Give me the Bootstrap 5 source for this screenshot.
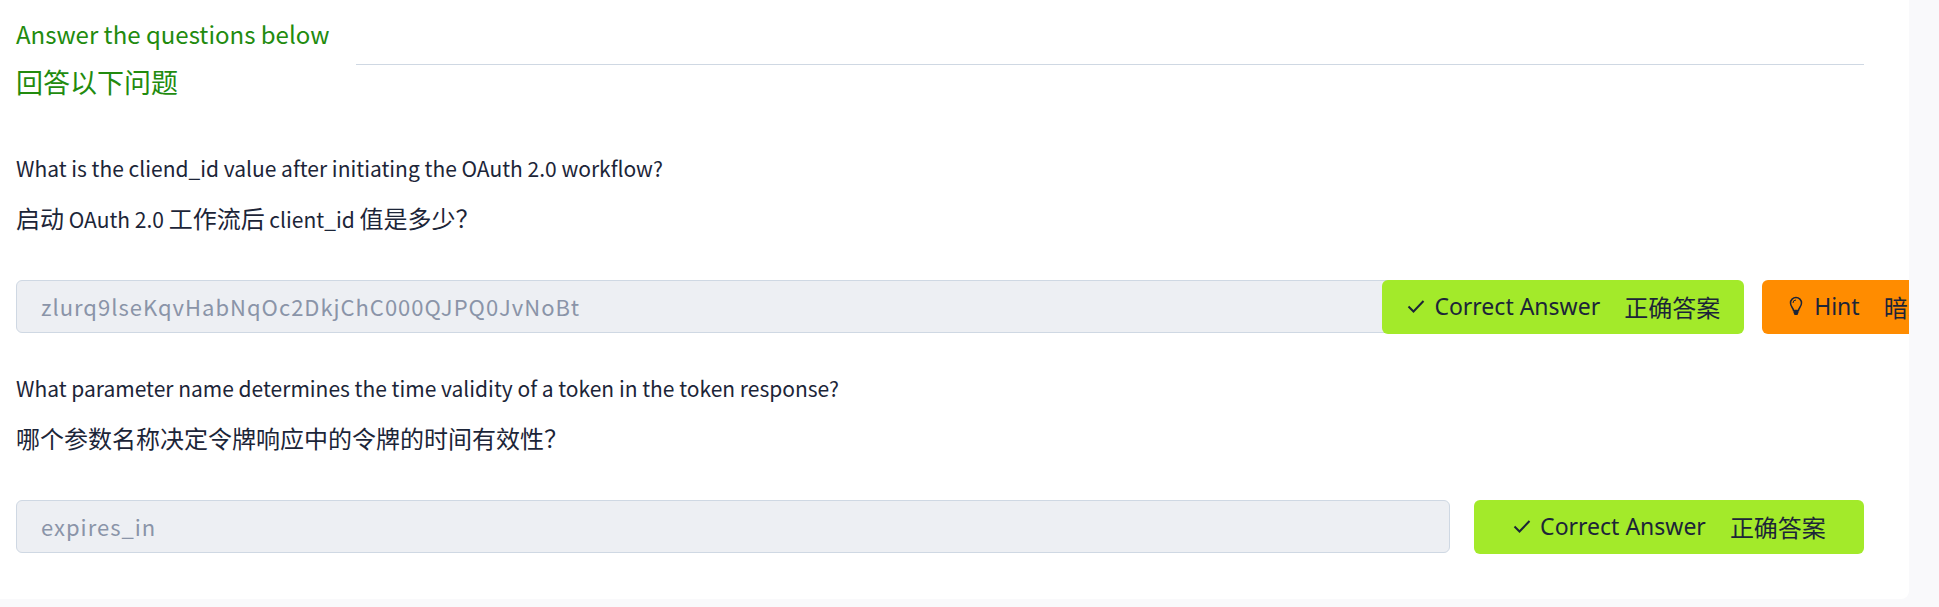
<!DOCTYPE html>
<html lang="en">
<head>
<meta charset="utf-8">
<meta name="viewport" content="width=device-width, initial-scale=1">
<title>Answer the questions below</title>
<link href="https://cdn.jsdelivr.net/npm/bootstrap@5.3.0/dist/css/bootstrap.min.css" rel="stylesheet">
<style>
  body { background: #f9f9fb; color: #1c2538; font-family: "Noto Sans CJK SC", sans-serif; font-size: 21px; line-height: 32px; }
  .task-panel { background: #fff; border-radius: 0 0 8px 0; margin-right: 30px; padding: 10px 45px 45px 16px; }
  .task-head { gap: 27px; margin-bottom: 34px; }
  .task-title { color: #228b0e; font-size: 24px; line-height: 48px; padding-bottom: 12px; }
  .task-title [lang] { font-size: 27px; }
  .task-line { border-top: 1px solid #cfd8e3; }
  .question + .question { margin-top: 38px; }
  .question label { margin-bottom: 45px; }
  .question label > span { display: block; }
  .question label > span + span { margin-top: 18px; }
  .zh { font-size: 24px; }
  .answer-row { display: grid; grid-template-columns: minmax(0, 1fr) 390px; column-gap: 24px; align-items: start; }
  .answer-actions { gap: 18px; }
  .answer-box, .answer-box:disabled { height: 53px; padding: 0 24px 2px; background: #edeff3; border: 1px solid #cfd8e3; border-radius: 6px; color: #8a94a8; font-size: 22px; letter-spacing: 1px; opacity: 1; }
  .answer-btn { height: 54px; padding: 0 24px 2px; border: 0; border-radius: 6px; color: #1c2538; font-family: "Noto Sans", "Noto Sans CJK SC", sans-serif; font-size: 23px; line-height: 32px; white-space: nowrap; }
  .answer-btn .zh { padding-top: 3px; }
  .btn-correct, .btn-correct:hover { background: #a3ea2a; color: #1c2538; }
  .btn-hint, .btn-hint:hover { background: #ff8c00; color: #1c2538; }
</style>
</head>
<body>
<main class="task-panel overflow-hidden">
  <header class="task-head d-flex align-items-center">
    <h1 class="task-title fw-normal m-0">Answer the questions below<span class="d-block" lang="zh-CN">回答以下问题</span></h1>
    <div class="task-line flex-grow-1"></div>
  </header>

  <section class="question">
    <label class="d-block" for="answer1">
      <span>What is the cliend_id value after initiating the OAuth 2.0 workflow?</span>
      <span lang="zh-CN"><span class="zh">启动</span> OAuth 2.0 <span class="zh">工作流后</span> client_id <span class="zh">值是多少？</span></span>
    </label>
    <div class="answer-row">
      <input class="answer-box form-control" id="answer1" type="text" value="zlurq9lseKqvHabNqOc2DkjChC000QJPQ0JvNoBt" disabled>
      <div class="answer-actions d-flex justify-content-center">
        <button class="btn answer-btn btn-correct d-flex align-items-center flex-shrink-0" type="button">
          <svg class="me-2 flex-shrink-0" width="20" height="20" viewBox="0 0 20 20" fill="none" stroke="currentColor" stroke-width="2" aria-hidden="true"><path d="M2.500 10.500l5 5L17.500 5"/></svg>
          <span class="me-4">Correct Answer</span><span class="zh" lang="zh-CN">正确答案</span>
        </button>
        <button class="btn answer-btn btn-hint d-flex align-items-center flex-shrink-0" type="button">
          <svg class="me-2 flex-shrink-0" width="20" height="20" viewBox="0 0 20 20" fill="none" stroke="currentColor" stroke-width="1.500" aria-hidden="true"><path d="M7.500 14.500C7.300 12 4.500 10.500 4.500 7a5.500 5.500 0 0 1 11 0c0 3.500-2.800 5-3 7.500z"/><path d="M7 7a3 3 0 0 1 3-3" stroke-width="1"/><path d="M7.500 15h5v1.500L11.500 19h-3l-1-2.500z" fill="currentColor" stroke="none"/></svg>
          <span class="me-4">Hint</span><span class="zh" lang="zh-CN">暗示</span>
        </button>
      </div>
    </div>
  </section>

  <section class="question">
    <label class="d-block" for="answer2">
      <span>What parameter name determines the time validity of a token in the token response?</span>
      <span lang="zh-CN"><span class="zh">哪个参数名称决定令牌响应中的令牌的时间有效性？</span></span>
    </label>
    <div class="answer-row">
      <input class="answer-box form-control" id="answer2" type="text" value="expires_in" disabled>
      <button class="btn answer-btn btn-correct d-flex align-items-center justify-content-center" type="button">
        <svg class="me-2 flex-shrink-0" width="20" height="20" viewBox="0 0 20 20" fill="none" stroke="currentColor" stroke-width="2" aria-hidden="true"><path d="M2.500 10.500l5 5L17.500 5"/></svg>
        <span class="me-4">Correct Answer</span><span class="zh" lang="zh-CN">正确答案</span>
      </button>
    </div>
  </section>
</main>
<script src="https://cdn.jsdelivr.net/npm/bootstrap@5.3.0/dist/js/bootstrap.bundle.min.js"></script>
</body>
</html>
